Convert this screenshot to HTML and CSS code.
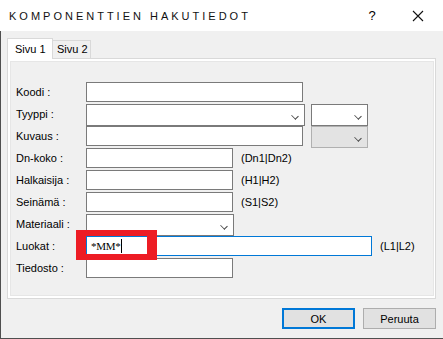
FILE: index.html
```html
<!DOCTYPE html>
<html lang="fi">
<head>
    <meta charset="UTF-8">
    <title>Komponenttien hakutiedot</title>
    <link rel="stylesheet" href="styles.css">
</head>
<body>
    <div class="window">
        <div class="titlebar">
            <span class="title">KOMPONENTTIEN HAKUTIEDOT</span>
            <span class="help">?</span>
            <span class="close">
                <svg width="12" height="12" viewBox="0 0 12 12"><path d="M1 1 L11 11 M11 1 L1 11" stroke="#111" stroke-width="1.1" fill="none"/></svg>
            </span>
        </div>
        <div class="dialog">
            <div class="tabs">
                <div class="tab active">Sivu 1</div>
                <div class="tab">Sivu 2</div>
            </div>
            <div class="tabpage">
                <div class="page-inner">
                    <div class="row">
                        <label class="lbl">Koodi :</label>
                        <div class="field w-long"></div>
                    </div>
                    <div class="row">
                        <label class="lbl">Tyyppi :</label>
                        <div class="combo w-type"><span class="arrow"></span></div>
                        <div class="combo w-small gap-6"><span class="arrow"></span></div>
                    </div>
                    <div class="row">
                        <label class="lbl">Kuvaus :</label>
                        <div class="field w-long"></div>
                        <div class="combo w-small gap-8 disabled"><span class="arrow"></span></div>
                    </div>
                    <div class="row">
                        <label class="lbl">Dn-koko :</label>
                        <div class="field w-short"></div>
                        <span class="hint">(Dn1|Dn2)</span>
                    </div>
                    <div class="row">
                        <label class="lbl">Halkaisija :</label>
                        <div class="field w-short"></div>
                        <span class="hint">(H1|H2)</span>
                    </div>
                    <div class="row">
                        <label class="lbl">Seinämä :</label>
                        <div class="field w-short"></div>
                        <span class="hint">(S1|S2)</span>
                    </div>
                    <div class="row">
                        <label class="lbl">Materiaali :</label>
                        <div class="combo w-mat"><span class="arrow"></span></div>
                    </div>
                    <div class="row">
                        <label class="lbl">Luokat :</label>
                        <div class="field w-wide focused"><span class="value">*MM*</span><span class="caret"></span></div>
                        <span class="hint">(L1|L2)</span>
                    </div>
                    <div class="row">
                        <label class="lbl">Tiedosto :</label>
                        <div class="field w-short"></div>
                    </div>
                </div>
            </div>
            <div class="buttons">
                <button class="btn default">OK</button>
                <button class="btn">Peruuta</button>
            </div>
        </div>
        <div class="markup"></div>
    </div>
</body>
</html>
```

FILE: styles.css
```css
body {
    margin: 0;
    font-family: "Liberation Sans", Arial, sans-serif;
    font-size: 11px;
    color: #000;
    background: #f0f0f0;
}
.window {
    position: relative;
    width: 443px;
    height: 339px;
    display: flex;
    flex-direction: column;
}
.titlebar {
    height: 31px;
    background: #fff;
    display: flex;
    align-items: center;
    flex-shrink: 0;
}
.title {
    padding-left: 9px;
    letter-spacing: 3px;
    font-size: 11px;
    color: #111;
    flex: 1;
}
.help {
    font-size: 13px;
    width: 46px;
    text-align: center;
}
.close {
    width: 46px;
    display: flex;
    justify-content: center;
    margin-right: 2px;
}
.dialog {
    flex: 1;
    border-left: 1px solid #4f4f4f;
    border-bottom: 1px solid #4f4f4f;
    padding: 7px 0 0 6px;
}
.tabs {
    display: flex;
    align-items: flex-end;
    height: 20px;
}
.tab {
    height: 18px;
    line-height: 17px;
    padding: 0 0 0 4px;
    border: 1px solid #d9d9d9;
    border-bottom: none;
    background: #f0f0f0;
    box-sizing: border-box;
    width: 39px;
    margin-left: -1px;
    white-space: nowrap;
}
.tab.active {
    position: relative;
    z-index: 1;
    height: 21px;
    width: 46px;
    margin-left: 0;
    margin-bottom: -1px;
    padding: 1px 0 0 7px;
    background: #fff;
    line-height: 18px;
}
.tabpage {
    width: 429px;
    height: 241px;
    box-sizing: border-box;
    border: 1px solid #d9d9d9;
    background: #fff;
    padding: 2px 1px 2px 2px;
}
.page-inner {
    height: 100%;
    box-sizing: border-box;
    border: 1px solid #e6e6e6;
    background: #f0f0f0;
    padding: 20px 0 0 5px;
}
.row {
    display: flex;
    align-items: flex-start;
    height: 22px;
}
.lbl {
    width: 70px;
    height: 20px;
    line-height: 20px;
    flex-shrink: 0;
}
.field {
    height: 20px;
    box-sizing: border-box;
    border: 1px solid #7a7a7a;
    background: #fff;
    display: flex;
    align-items: center;
}
.combo {
    position: relative;
    height: 22px;
    box-sizing: border-box;
    border: 1px solid #7a7a7a;
    background: #fff;
}
.combo.disabled {
    background: #e3e3e3;
    border-color: #b0b0b0;
}
.arrow {
    position: absolute;
    right: 6px;
    top: 8px;
    width: 5px;
    height: 5px;
    border-right: 1px solid #444;
    border-bottom: 1px solid #444;
    transform: rotate(45deg) scaleY(0.8);
    transform-origin: center;
}
.w-long { width: 217px; }
.w-type { width: 219px; }
.w-small { width: 57px; }
.w-short { width: 147px; }
.w-mat { width: 148px; }
.w-wide { width: 286px; }
.gap-6 { margin-left: 6px; }
.gap-8 { margin-left: 8px; }
.hint {
    margin-left: 8px;
    height: 20px;
    line-height: 20px;
}
.focused {
    border-color: #0078d7;
}
.value {
    font-family: "Liberation Serif", "Times New Roman", serif;
    font-size: 11px;
    padding-left: 4px;
    letter-spacing: -0.3px;
}
.caret {
    width: 1px;
    height: 14px;
    background: #000;
    margin-left: 1px;
}
.buttons {
    display: flex;
    justify-content: flex-end;
    gap: 8px;
    margin-top: 9px;
    padding-right: 7px;
}
.btn {
    width: 73px;
    height: 21px;
    box-sizing: border-box;
    background: #e1e1e1;
    border: 1px solid #adadad;
    font-family: "Liberation Sans", Arial, sans-serif;
    font-size: 11px;
    color: #000;
    padding: 0;
}
.btn.default {
    border: 2px solid #0078d7;
}
.markup {
    position: absolute;
    left: 76px;
    top: 230px;
    width: 81px;
    height: 30px;
    box-sizing: border-box;
    border-style: solid;
    border-color: #ed1c24;
    border-width: 6px 10px;
}
```
